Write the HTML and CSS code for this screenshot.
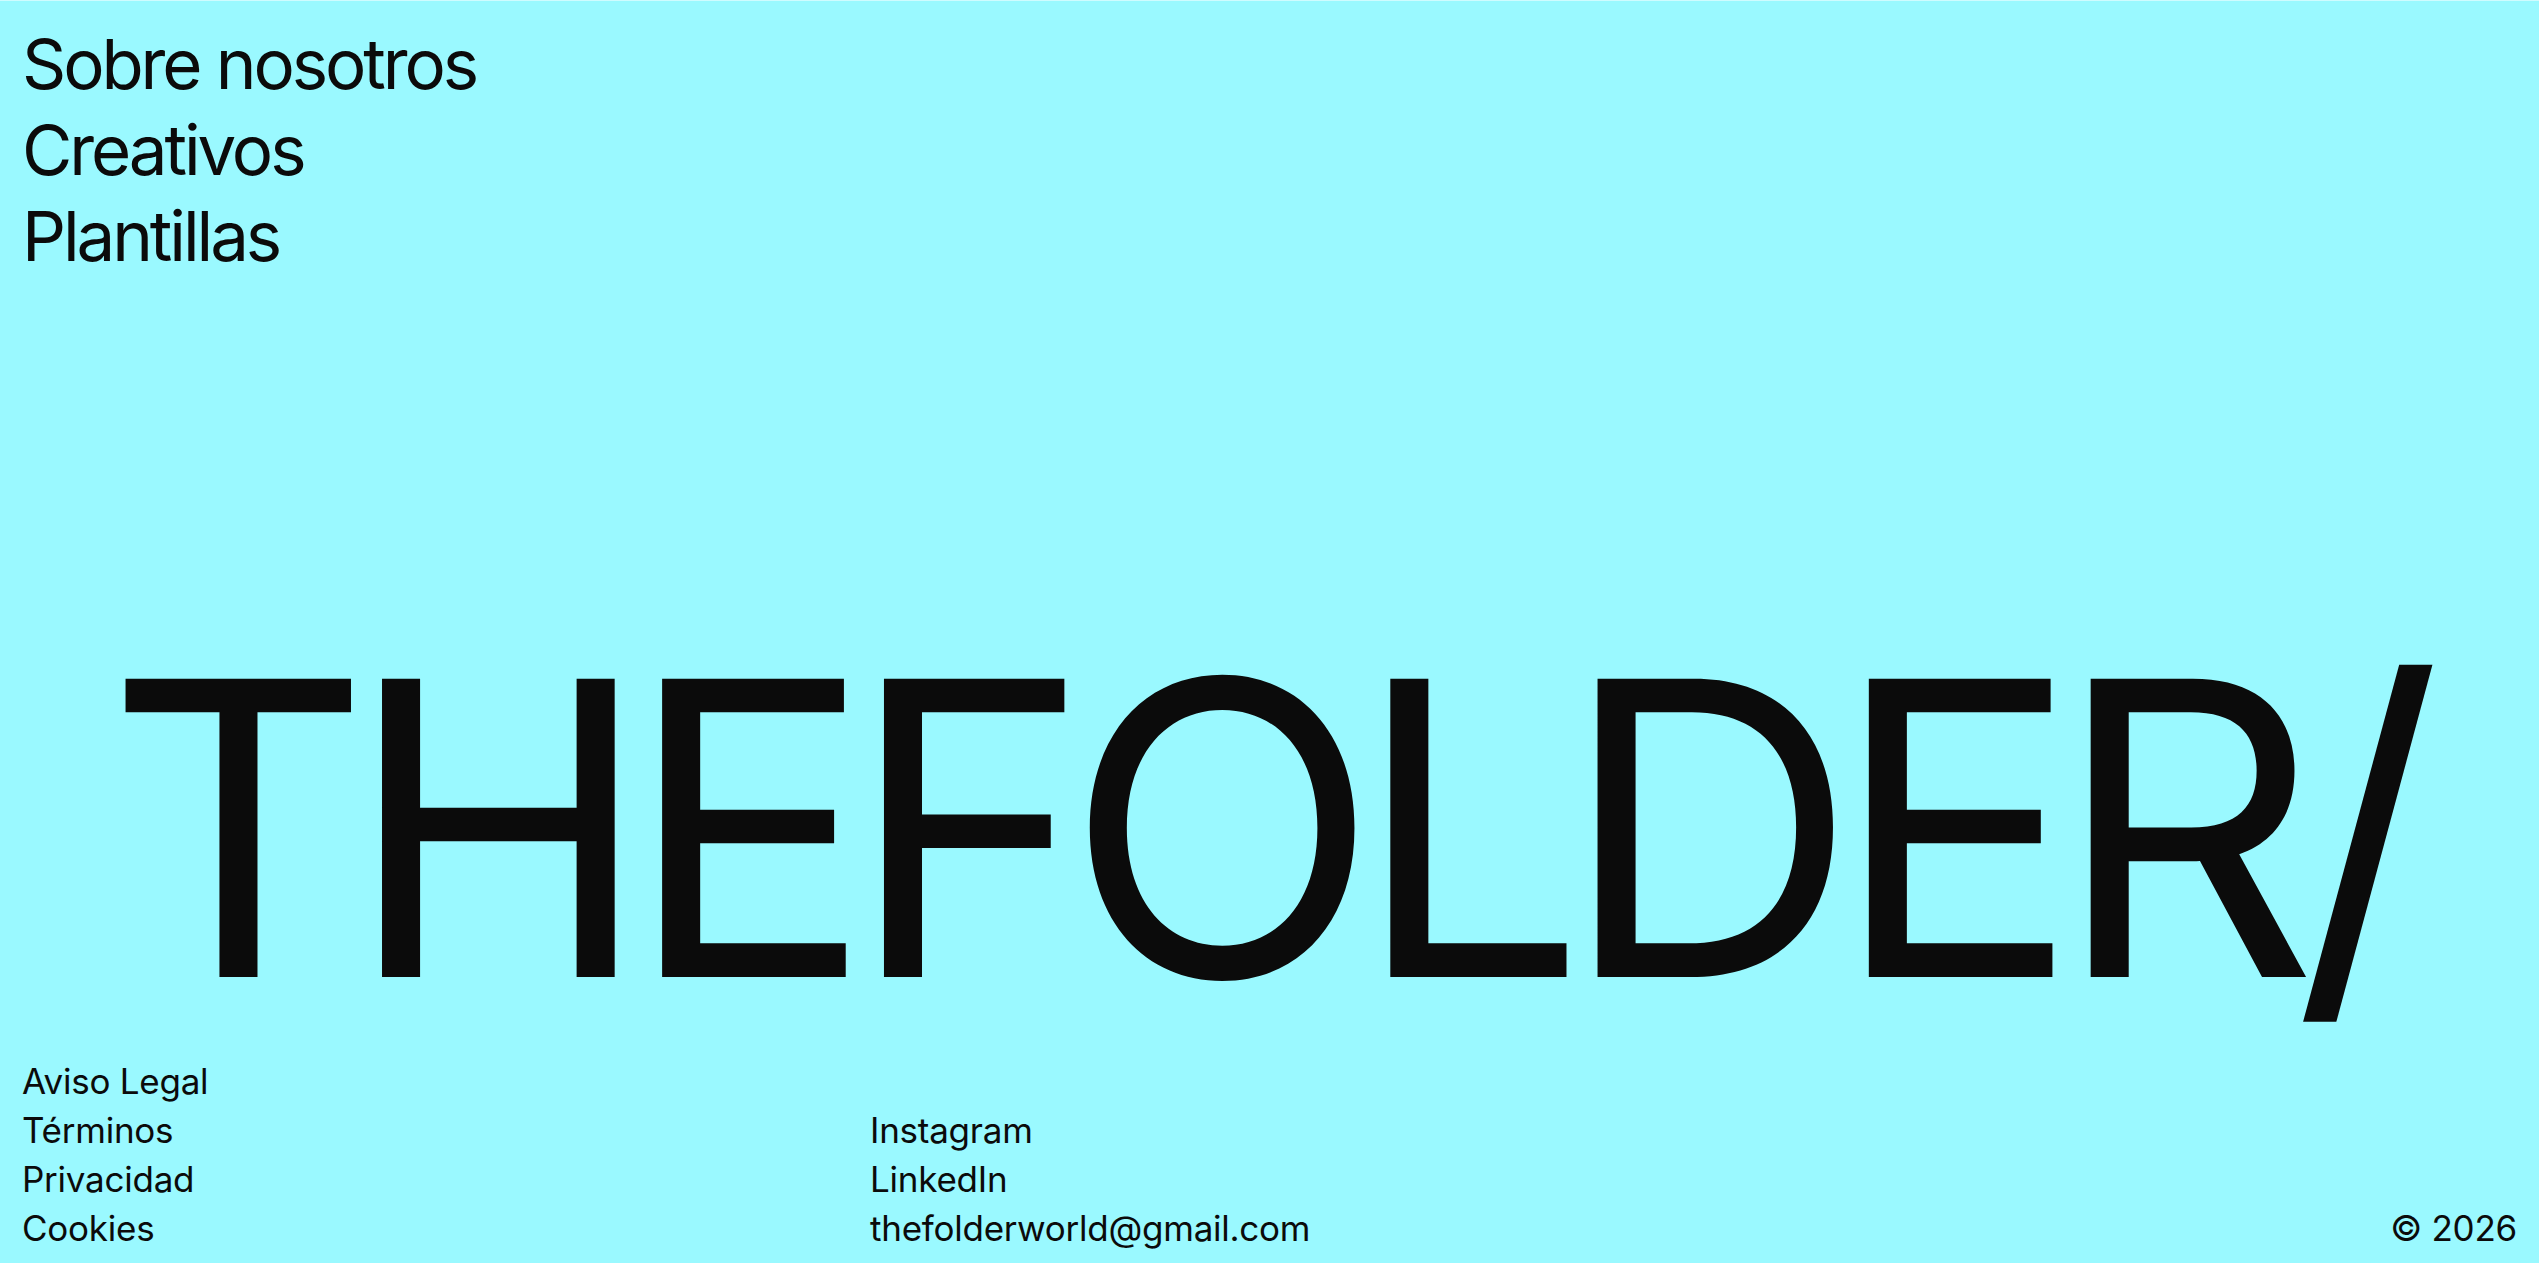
FILE: index.html
```html
<!DOCTYPE html>
<html lang="es">
<head>
<meta charset="utf-8">
<title>THEFOLDER/</title>
<link rel="stylesheet" href="styles.css">
</head>
<body>
<div class="page">
  <nav class="nav">
    <a class="nav-link" href="#">Sobre nosotros</a>
    <a class="nav-link" href="#">Creativos</a>
    <a class="nav-link" href="#">Plantillas</a>
  </nav>
  <div class="spacer"></div>
  <h1 class="brand">THEFOLDER/</h1>
  <footer class="footer">
    <div class="foot-col">
      <a class="foot-link" href="#">Aviso Legal</a>
      <a class="foot-link" href="#">Términos</a>
      <a class="foot-link" href="#">Privacidad</a>
      <a class="foot-link" href="#">Cookies</a>
    </div>
    <div class="foot-col">
      <a class="foot-link" href="#">Instagram</a>
      <a class="foot-link" href="#">LinkedIn</a>
      <a class="foot-link" href="#">thefolderworld@gmail.com</a>
    </div>
    <div class="foot-col foot-right">
      <span class="foot-link">© 2026</span>
    </div>
  </footer>
</div>
</body>
</html>
```
FILE: styles.css
```css
* { box-sizing: border-box; }
html, body { margin: 0; padding: 0; }
body {
  background: #9af9ff;
  color: #0b0b0b;
  font-family: Inter, "Liberation Sans", sans-serif;
}
.page {
  min-height: 100vh;
  display: flex;
  flex-direction: column;
  border-top: 1px solid #cffcff;
  padding: 20px 22px 10px 22px;
}
.nav {
  display: flex;
  flex-direction: column;
  align-items: flex-start;
}
.nav-link {
  color: inherit;
  text-decoration: none;
  font-size: 69px;
  line-height: 86px;
  letter-spacing: -0.045em;
}
.spacer { flex: 1; }
.brand {
  margin: 0;
  padding-right: 16px;
  font-weight: 400;
  font-size: 410px;
  line-height: 400px;
  letter-spacing: -0.06em;
  text-align: center;
  white-space: nowrap;
}
.footer {
  margin-top: 29px;
  display: grid;
  grid-template-columns: 848px 1fr auto;
  align-items: end;
}
.foot-col {
  display: flex;
  flex-direction: column;
  align-items: flex-start;
}
.foot-right { align-items: flex-end; }
.foot-link {
  color: inherit;
  text-decoration: none;
  font-size: 35px;
  line-height: 49px;
  letter-spacing: -0.007em;
}
```
